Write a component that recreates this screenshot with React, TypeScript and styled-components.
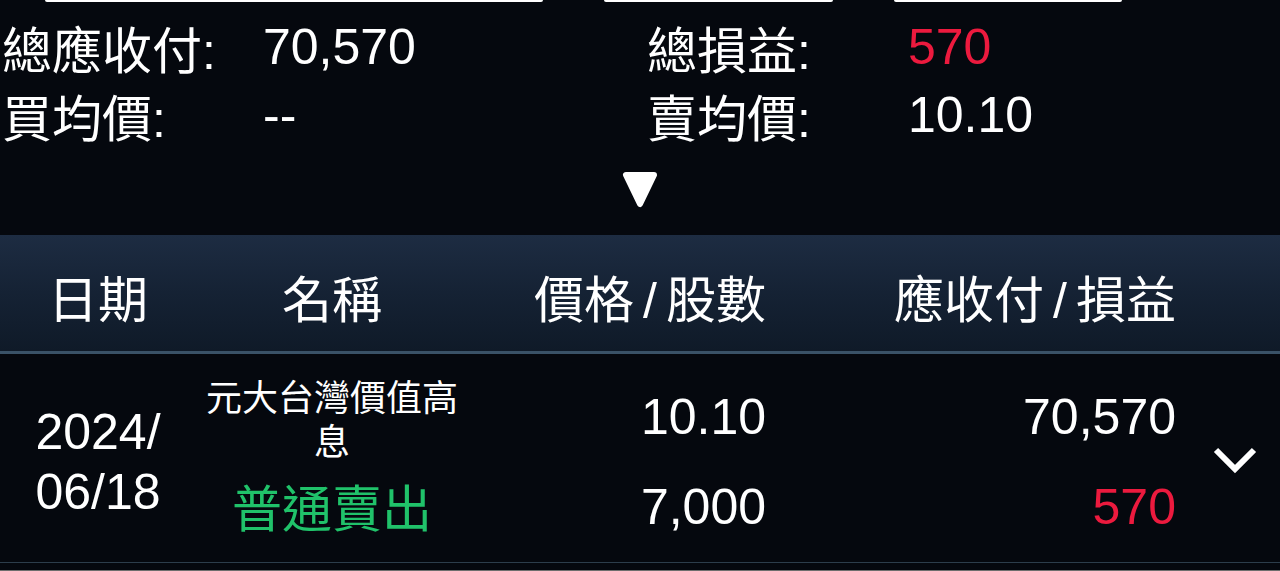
import React from 'react';
import styled, { createGlobalStyle } from 'styled-components';

const GlobalStyle = createGlobalStyle`
    html, body {
        margin: 0;
        padding: 0;
        background: #05080e;
    }
    body {
        font-family: "Liberation Sans", "Noto Sans CJK TC", sans-serif;
        color: #ffffff;
    }
`;

const Page = styled.div`
    width: 1280px;
    height: 571px;
    overflow: hidden;
    background: #05080e;
    display: flex;
    flex-direction: column;
`;

const ButtonStrip = styled.div`
    display: flex;
    gap: 61px;
    padding-left: 45px;
    height: 2px;
`;

const TabEdge = styled.div<{ $w: number }>`
    width: ${(p) => p.$w}px;
    height: 2px;
    background: #ffffff;
    border-radius: 0 0 2px 2px;
`;

const Summary = styled.div`
    display: grid;
    grid-template-columns: 261px 384px 261px 1fr;
    grid-auto-rows: 68px;
    align-items: center;
    padding: 11px 0 0 2px;
    font-size: 50px;
`;

const Label = styled.div`
    white-space: nowrap;
`;

const Value = styled.div<{ $red?: boolean }>`
    color: ${(p) => (p.$red ? '#ec1a3e' : '#ffffff')};
`;

const ToggleWrap = styled.div`
    display: flex;
    justify-content: center;
    margin-top: 21px;
    height: 40px;
`;

const TableHead = styled.div`
    margin-top: 25px;
    height: 119px;
    box-sizing: border-box;
    background: linear-gradient(180deg, #1d2c42 0%, #152234 50%, #0f1a28 100%);
    border-bottom: 3px solid #3a5267;
    display: grid;
    grid-template-columns: 196px 272px 298px 410px 1fr;
    align-items: center;
    font-size: 50px;
    padding-top: 6px;
`;

const HeadCell = styled.div<{ $align: 'center' | 'right' }>`
    text-align: ${(p) => p.$align};
    white-space: nowrap;
`;

const Slash = styled.span`
    font-family: "Liberation Sans", sans-serif;
    padding: 0 9px;
`;

const Row = styled.div`
    height: 208px;
    border-bottom: 1px solid #2c3d4b;
    display: grid;
    grid-template-columns: 196px 272px 298px 410px 1fr;
    align-items: center;
`;

const DateCell = styled.div`
    text-align: center;
    font-size: 50px;
    line-height: 60px;
    padding-top: 8px;
`;

const NameCell = styled.div`
    display: flex;
    flex-direction: column;
    align-items: center;
`;

const NameText = styled.div`
    font-size: 36px;
    line-height: 44px;
    max-width: 262px;
    text-align: center;
`;

const Status = styled.div`
    font-size: 50px;
    line-height: 60px;
    margin-top: 15px;
    color: #20c26a;
`;

const NumCell = styled.div`
    display: flex;
    flex-direction: column;
    align-items: flex-end;
    font-size: 50px;
    line-height: 90px;
    padding-top: 8px;
`;

const Num = styled.div<{ $red?: boolean }>`
    color: ${(p) => (p.$red ? '#ec1a3e' : '#ffffff')};
`;

const ChevronCell = styled.div`
    display: flex;
    justify-content: center;
    padding-left: 14px;
    padding-top: 4px;
`;

const Footer = styled.div`
    flex: 1;
    border-bottom: 1px solid #6e6e6e;
`;

const Triangle = () => (
    <svg width="40" height="40" viewBox="0 0 40 40">
        <polygon
            points="6,5 34,5 20,34"
            fill="#ffffff"
            stroke="#ffffff"
            strokeWidth="6"
            strokeLinejoin="round"
        />
    </svg>
);

const Chevron = () => (
    <svg width="46" height="30" viewBox="0 0 46 30">
        <polyline
            points="4,5 23,24 42,5"
            fill="none"
            stroke="#ffffff"
            strokeWidth="6"
        />
    </svg>
);

const App: React.FC = () => {
    return (
        <Page>
            <GlobalStyle />
            <ButtonStrip>
                <TabEdge $w={498} />
                <TabEdge $w={229} />
                <TabEdge $w={228} />
            </ButtonStrip>

            <Summary>
                <Label>總應收付:</Label>
                <Value>70,570</Value>
                <Label>總損益:</Label>
                <Value $red>570</Value>
                <Label>買均價:</Label>
                <Value>--</Value>
                <Label>賣均價:</Label>
                <Value>10.10</Value>
            </Summary>

            <ToggleWrap>
                <Triangle />
            </ToggleWrap>

            <TableHead>
                <HeadCell $align="center">日期</HeadCell>
                <HeadCell $align="center">名稱</HeadCell>
                <HeadCell $align="right">
                    價格<Slash>/</Slash>股數
                </HeadCell>
                <HeadCell $align="right">
                    應收付<Slash>/</Slash>損益
                </HeadCell>
                <div />
            </TableHead>

            <Row>
                <DateCell>
                    2024/
                    <br />
                    06/18
                </DateCell>
                <NameCell>
                    <NameText>元大台灣價值高息</NameText>
                    <Status>普通賣出</Status>
                </NameCell>
                <NumCell>
                    <Num>10.10</Num>
                    <Num>7,000</Num>
                </NumCell>
                <NumCell>
                    <Num>70,570</Num>
                    <Num $red>570</Num>
                </NumCell>
                <ChevronCell>
                    <Chevron />
                </ChevronCell>
            </Row>

            <Footer />
        </Page>
    );
};

export default App;
